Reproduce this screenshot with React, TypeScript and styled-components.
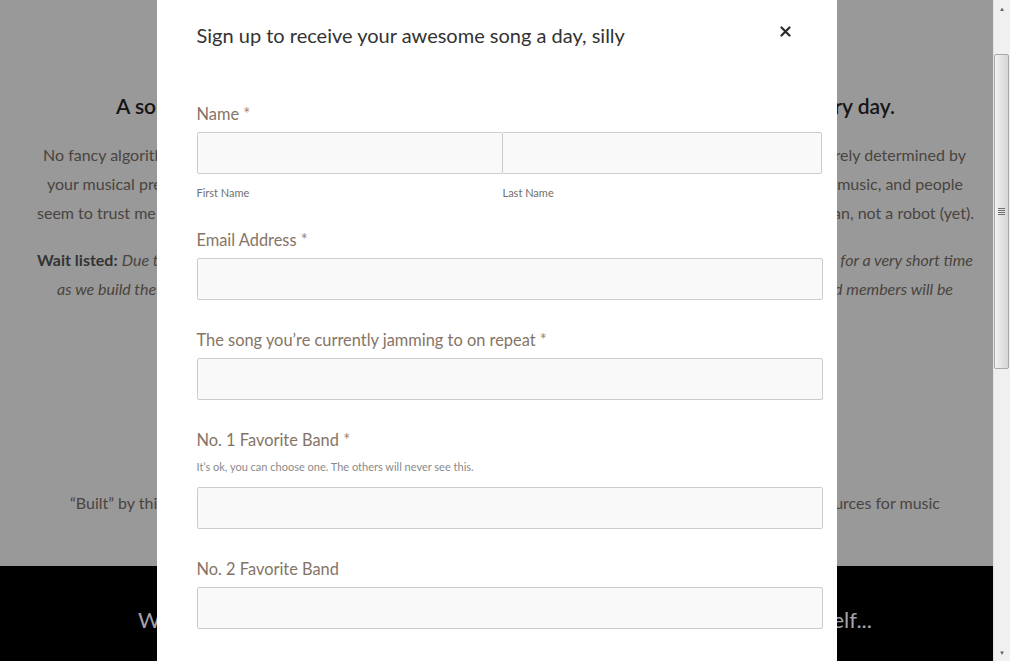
import styled, { createGlobalStyle } from 'styled-components';

const GlobalStyle = createGlobalStyle`
  html, body {
    margin: 0;
    padding: 0;
    overflow: hidden;
  }
  body {
    font-family: Lato, "Open Sans", sans-serif;
  }
`;

type Split = { left: React.ReactNode; right: React.ReactNode; l: number; r: number };

const introLines: Split[] = [
  { left: 'No fancy algorithms here, every', right: 'song is purely determined by', l: 43, r: 27 },
  { left: 'your musical preferences and', right: 'my taste in music, and people', l: 47, r: 30 },
  { left: 'seem to trust me on this one', right: 'I am a human, not a robot (yet).', l: 37, r: 19 },
];

const waitLines: Split[] = [
  {
    left: (
      <>
        <b>Wait listed:</b> <i>Due to high demand</i>
      </>
    ),
    right: <i>signups are paused for a very short time</i>,
    l: 37,
    r: 20,
  },
  { left: <i>as we build the next version.</i>, right: <i>Waitlisted members will be</i>, l: 57, r: 40 },
];

// the page behind the modal: only the edges of each line show
function SplitRow({ left, right, l, r, as }: Split & { as?: typeof Line }) {
  const Row = as ?? Line;
  return (
    <Row>
      <LeftCell $pad={l}>{left}</LeftCell>
      <span />
      <RightCell $pad={r}>
        <span>{right}</span>
      </RightCell>
    </Row>
  );
}

export default function App() {
  return (
    <>
      <GlobalStyle />
      <Screen>
        <Page>
          <Backdrop>
            <SplitRow as={Heading} left="A song a day" right="just for you, every day." l={116} r={98} />
            <Para>
              {introLines.map((line, i) => (
                <SplitRow key={i} {...line} />
              ))}
            </Para>
            <Para>
              {waitLines.map((line, i) => (
                <SplitRow key={i} {...line} />
              ))}
            </Para>
            <Credit>
              <SplitRow left="“Built” by this human with" right="one of the best sources for music" l={70} r={53} />
            </Credit>
          </Backdrop>
          <DarkBand>
            <SplitRow as={BandLine} left="We love music" right="see for yourself..." l={138} r={121} />
          </DarkBand>
          <Modal>
            <ModalHeader>
              <Title>Sign up to receive your awesome song a day, silly</Title>
              <Close aria-label="Close">
                <svg width="11" height="11" viewBox="0 0 11 11">
                  <path d="M1.5 1.5 L9.5 9.5 M9.5 1.5 L1.5 9.5" stroke="#2a2a2a" strokeWidth="2.2" strokeLinecap="round" />
                </svg>
              </Close>
            </ModalHeader>
            <Form>
              <Field>
                <Label>
                  Name <Req>*</Req>
                </Label>
                <NameGrid>
                  <Input />
                  <Input $joined />
                  <SubLabel>First Name</SubLabel>
                  <SubLabel>Last Name</SubLabel>
                </NameGrid>
              </Field>
              <Field>
                <Label>
                  Email Address <Req>*</Req>
                </Label>
                <Input />
              </Field>
              <Field>
                <Label>
                  The song you’re currently jamming to on repeat <Req>*</Req>
                </Label>
                <Input />
              </Field>
              <Field>
                <Label>
                  No. 1 Favorite Band <Req>*</Req>
                </Label>
                <Hint>It’s ok, you can choose one. The others will never see this.</Hint>
                <Input />
              </Field>
              <Field>
                <Label>No. 2 Favorite Band</Label>
                <Input />
              </Field>
            </Form>
          </Modal>
        </Page>
        <Scrollbar>
          <Arrow>▲</Arrow>
          <Track>
            <Thumb>
              <Grip />
            </Thumb>
          </Track>
          <Arrow>▼</Arrow>
        </Scrollbar>
      </Screen>
    </>
  );
}

const Screen = styled.div`
  display: flex;
  width: 1010px;
  height: 661px;
  overflow: hidden;
`;

const Page = styled.div`
  position: relative;
  flex: 1;
  display: flex;
  flex-direction: column;
  overflow: hidden;
`;

const Backdrop = styled.div`
  height: 566px;
  flex-shrink: 0;
  background: #999999;
  padding-top: 92px;
  box-sizing: border-box;
`;

const Line = styled.div`
  display: grid;
  grid-template-columns: 1fr 680px 1fr;
  white-space: nowrap;
  height: 29px;
  line-height: 29px;
  font-size: 16px;
  color: #4a4440;
  b {
    font-weight: 700;
    color: #333;
  }
`;

const LeftCell = styled.div<{ $pad: number }>`
  overflow: hidden;
  padding-left: ${(p) => p.$pad}px;
`;

const RightCell = styled.div<{ $pad: number }>`
  display: flex;
  justify-content: flex-end;
  overflow: hidden;
  padding-right: ${(p) => p.$pad}px;
`;

const Heading = styled(Line)`
  font-size: 21px;
  font-weight: 600;
  color: #151515;
  height: 28px;
  line-height: 28px;
`;

const Para = styled.div`
  margin-top: 20px;
  & + & {
    margin-top: 18px;
  }
`;

const Credit = styled.div`
  margin-top: 185px;
`;

const DarkBand = styled.div`
  flex: 1;
  background: #000;
  padding-top: 40px;
`;

const BandLine = styled(Line)`
  font-size: 22px;
  color: #a3a3ad;
  height: 28px;
  line-height: 28px;
`;

const Modal = styled.div`
  position: absolute;
  top: 0;
  bottom: 0;
  left: 50%;
  width: 680px;
  margin-left: -340px;
  background: #fff;
  padding: 0 14px 0 40px;
  box-sizing: border-box;
`;

const ModalHeader = styled.div`
  display: flex;
  align-items: center;
  justify-content: space-between;
  padding: 22px 32px 0 0;
  height: 48px;
  box-sizing: border-box;
`;

const Title = styled.h4`
  margin: 0;
  font-size: 20px;
  font-weight: 400;
  line-height: 26px;
  color: #333333;
`;

const Close = styled.button`
  border: 0;
  background: none;
  padding: 0;
  margin-top: -8px;
  display: flex;
  cursor: pointer;
`;

const Form = styled.form`
  padding-top: 56px;
`;

const Field = styled.div`
  margin-bottom: 30px;
`;

const Label = styled.div`
  font-size: 16.4px;
  line-height: 20px;
  color: #857466;
  margin-bottom: 8px;
`;

const Req = styled.span`
  color: #958676;
`;

const Hint = styled.div`
  font-size: 11px;
  line-height: 14px;
  color: #8a8a8a;
  margin: 10px 0 13px;
`;

const NameGrid = styled.div`
  display: grid;
  grid-template-columns: 306px 319px;
  row-gap: 12px;
`;

const Input = styled.input<{ $joined?: boolean }>`
  display: block;
  width: 100%;
  height: 42px;
  box-sizing: border-box;
  background: #f9f9f9;
  border: 1px solid #cccccc;
  border-radius: 2px;
  ${(p) => p.$joined && 'border-left: none; border-radius: 0 2px 2px 0;'}
  outline: none;
  font: inherit;
`;

const SubLabel = styled.div`
  font-size: 11px;
  line-height: 14px;
  color: #6f6f6f;
`;

const Scrollbar = styled.div`
  width: 17px;
  flex-shrink: 0;
  background: #f0f0f0;
  display: flex;
  flex-direction: column;
  border-left: 1px solid #e4e4e4;
  box-sizing: border-box;
`;

const Arrow = styled.div`
  height: 17px;
  font-size: 6px;
  line-height: 17px;
  text-align: center;
  color: #606060;
`;

const Track = styled.div`
  flex: 1;
  padding-top: 37px;
`;

const Thumb = styled.div`
  margin: 0 1px 0 0;
  height: 313px;
  border: 1px solid #a8a8a8;
  border-radius: 2px;
  background: linear-gradient(to right, #f4f4f4 0%, #e6e6e6 40%, #d6d6d6 100%);
  display: flex;
  align-items: center;
  justify-content: center;
`;

const Grip = styled.div`
  width: 7px;
  height: 7px;
  background: repeating-linear-gradient(to bottom, #707070 0 1px, transparent 1px 2px);
`;
